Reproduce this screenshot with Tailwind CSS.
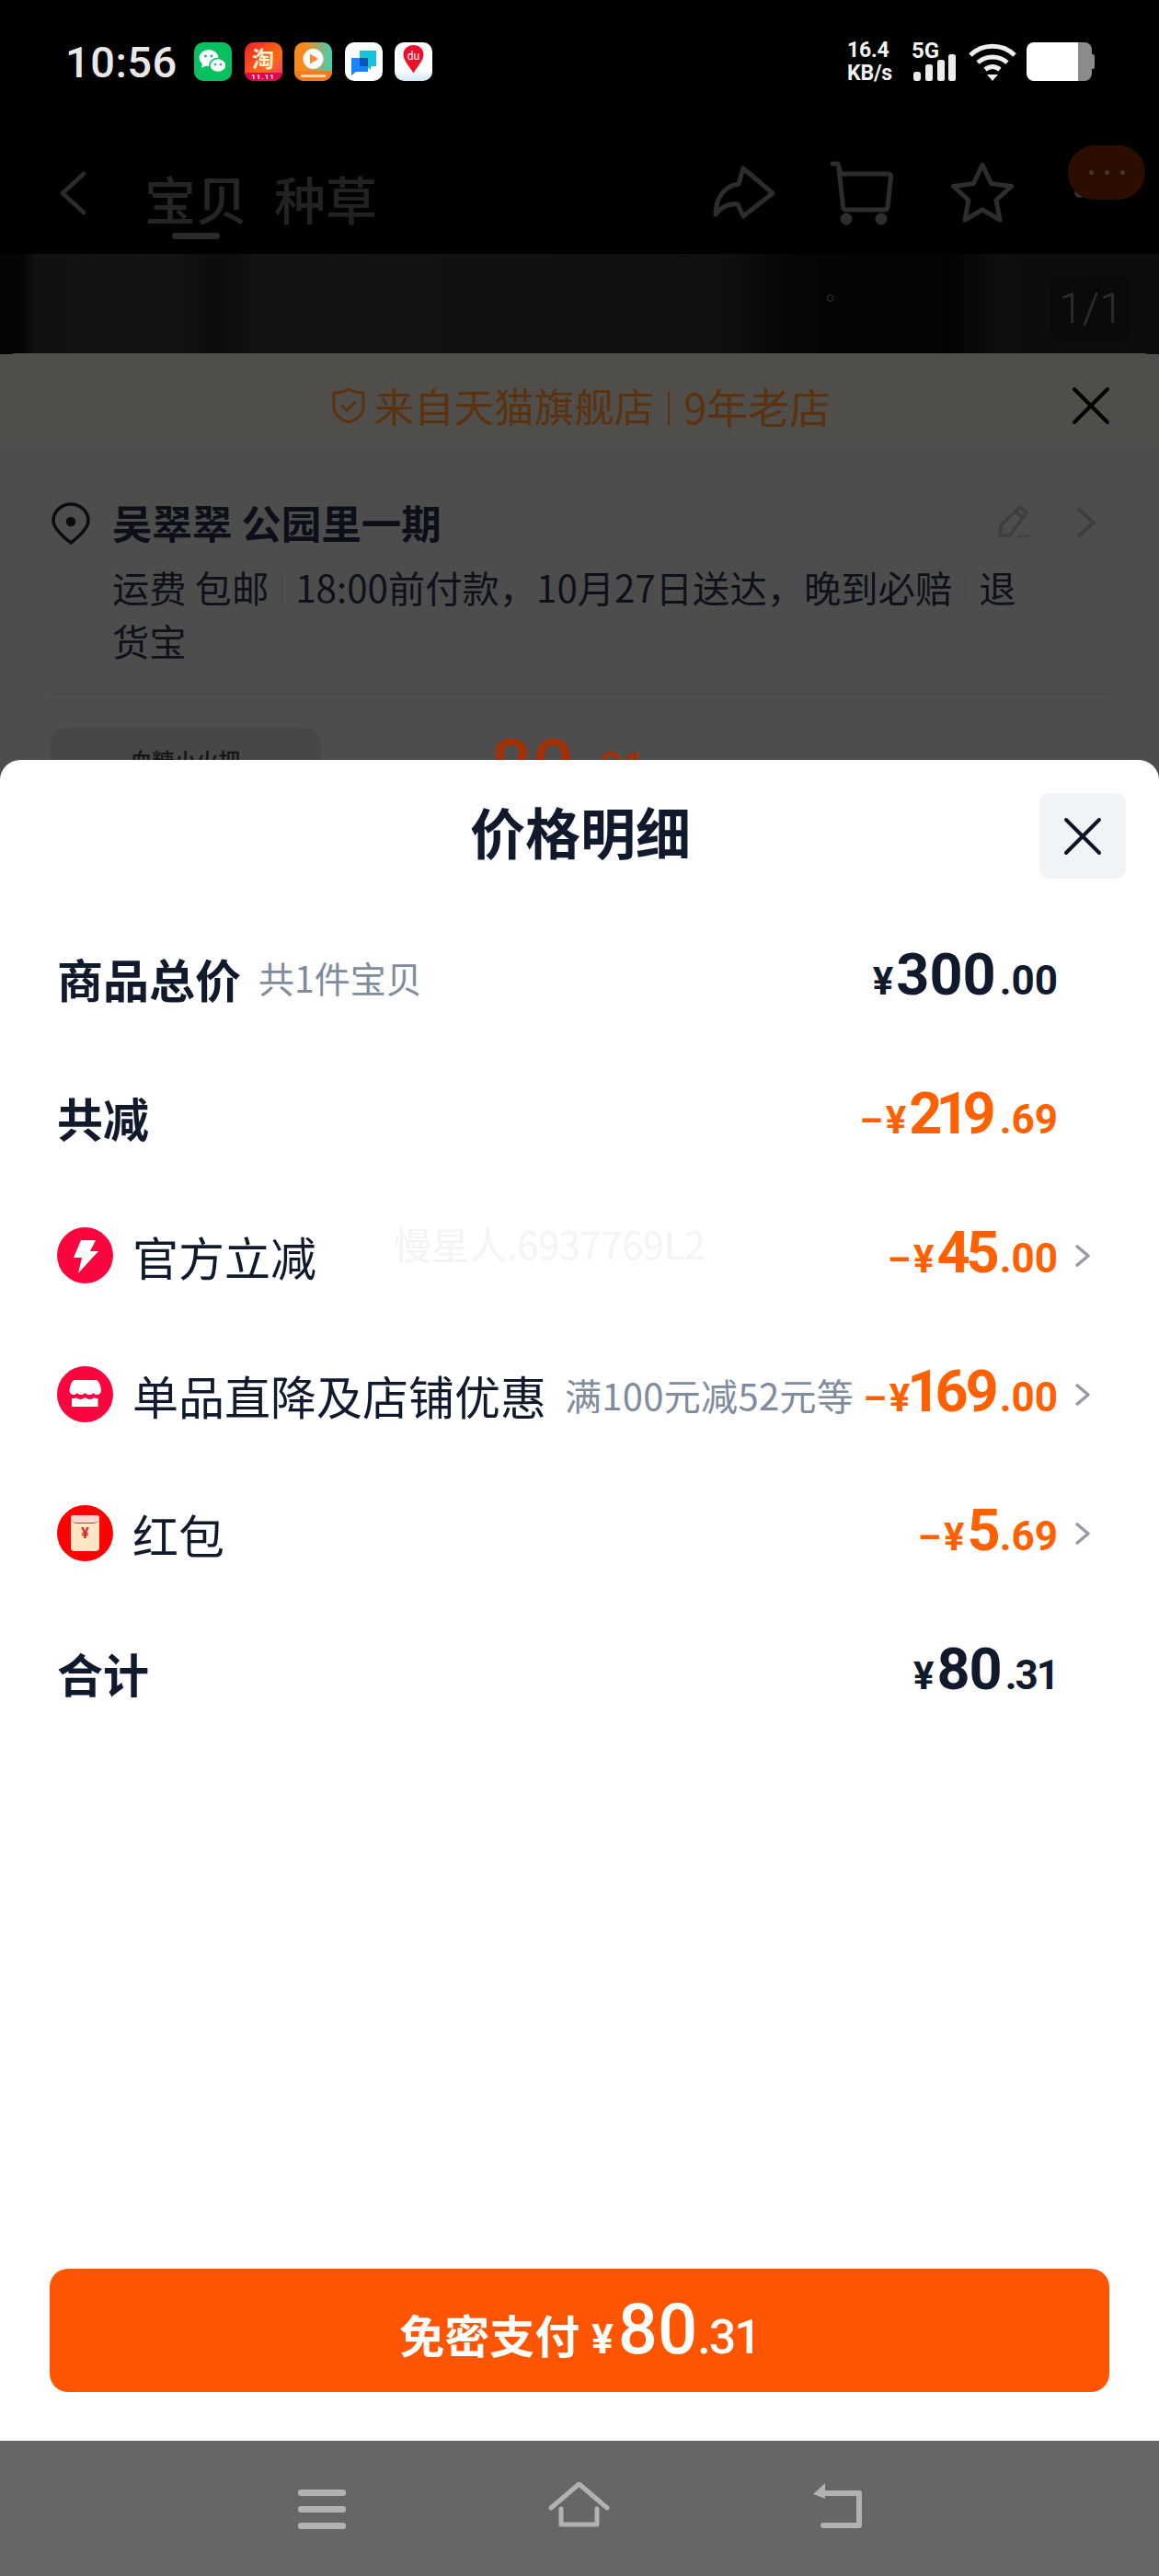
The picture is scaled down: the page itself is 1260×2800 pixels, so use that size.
<!DOCTYPE html>
<html lang="zh-CN">
<head>
    <meta charset="UTF-8">
    <meta name="viewport" content="width=device-width, initial-scale=1.0">
    <title>价格明细</title>
    <script src="https://cdn.jsdelivr.net/npm/@tailwindcss/browser@4"></script>
</head>
<body class="bg-black font-['Noto_Sans_CJK_SC',sans-serif]">
<div class="w-[1260px] h-[2800px] flex flex-col overflow-hidden">

    <!-- Dimmed page behind the sheet -->
    <div class="h-[826px] shrink-0 bg-[#4d4d4d] flex flex-col overflow-hidden">
        <div class="bg-black h-[276px] shrink-0 flex flex-col">
            <!-- Status bar -->
            <div class="h-[148px] shrink-0 flex justify-between pt-[46px] pl-[71px] pr-[70px] relative">
                <div class="flex items-start">
                    <span class="w-[122px] h-[42px] flex items-center text-[47px] leading-none font-medium text-[#e8e8e8] font-['Roboto',sans-serif] tracking-[0.5px]">10:56</span>
                    <div class="flex gap-[13.5px] ml-[18px]">
                        <!-- wechat -->
                        <svg class="w-[41px] h-[42px]" viewBox="0 0 41 42"><rect width="41" height="42" rx="10" fill="#07c160"/><ellipse cx="16" cy="17" rx="10.5" ry="9" fill="#fff"/><path d="M9 23l-1 5 6-3z" fill="#fff"/><ellipse cx="26" cy="25" rx="9" ry="7.5" fill="#fff" stroke="#07c160" stroke-width="1.5"/><circle cx="12.5" cy="15" r="1.4" fill="#07c160"/><circle cx="19" cy="15" r="1.4" fill="#07c160"/><circle cx="23" cy="24" r="1.2" fill="#07c160"/><circle cx="29" cy="24" r="1.2" fill="#07c160"/></svg>
                        <!-- taobao -->
                        <div class="w-[41px] h-[42px] rounded-[10px] overflow-hidden flex flex-col bg-[linear-gradient(135deg,#e8202a,#ff6a13_60%,#f0307a)]">
                            <span class="h-[33px] flex items-center justify-center text-[24px] leading-none font-bold text-[#fff3d0]">淘</span>
                            <span class="h-[9px] bg-[#e6004d] text-[8px] leading-[9px] text-center text-white font-bold font-['Roboto',sans-serif] tracking-[1px]">11.11</span>
                        </div>
                        <!-- video -->
                        <svg class="w-[41px] h-[42px]" viewBox="0 0 41 42"><defs><linearGradient id="v" x1="0" y1="0" x2="1" y2="0"><stop offset="0.3" stop-color="#f78a1e"/><stop offset="1" stop-color="#3fd0b4"/></linearGradient></defs><rect width="41" height="42" rx="10" fill="url(#v)"/><path d="M0 31h41v1a10 10 0 0 1-10 10H10A10 10 0 0 1 0 32z" fill="#f47a1c"/><circle cx="20.500" cy="18" r="11" fill="#fff"/><path d="M17 12.500l9 5.500-9 5.500z" fill="#f78a2e"/><rect x="7" y="35" width="27" height="3" fill="#ffd9b3"/></svg>
                        <!-- messages -->
                        <svg class="w-[41px] h-[42px]" viewBox="0 0 41 42"><rect width="41" height="42" rx="10" fill="#fff"/><path d="M16 9h18v17h-6v4l-5-4h-7z" fill="#17c3d6"/><path d="M7 17h18v15H12l-5 4z" fill="#1a84ff"/><rect x="16" y="17" width="9" height="9" fill="#0b55b5"/></svg>
                        <!-- baidu map -->
                        <div class="w-[41px] h-[42px] rounded-[10px] overflow-hidden bg-[linear-gradient(180deg,#fff_70%,#cfe9f5)] flex justify-center relative">
                            <svg class="w-[41px] h-[42px]" viewBox="0 0 41 42"><path d="M20.500 3c6.500 0 11 4.600 11 10.500 0 6-6 12-11 20-5-8-11-14-11-20C9.500 7.600 14 3 20.500 3z" fill="#ee0f2d"/></svg>
                            <span class="absolute top-[9px] text-[12px] leading-none text-white font-['Roboto',sans-serif]">du</span>
                        </div>
                    </div>
                </div>
                <div class="flex items-start">
                    <div class="w-[54px] font-['Roboto',sans-serif] font-bold text-[#f2f2f2] text-[23px] leading-[25px] -mt-[4px] tracking-[-0.2px]">
                        <div>16.4</div>
                        <div>KB/s</div>
                    </div>
                    <div class="w-[50px] ml-[16px] relative h-[42px]">
                        <span class="absolute left-0 -top-[3px] font-['Roboto',sans-serif] font-bold text-[#f2f2f2] text-[24px] leading-[24px]">5G</span>
                        <svg class="absolute left-0 top-0 w-[50px] h-[42px]" viewBox="0 0 50 42" fill="#ececec"><rect x="2" y="32" width="8" height="10" rx="3"/><rect x="15" y="24" width="8" height="18" rx="2.500"/><rect x="28" y="19" width="8" height="23" rx="2.500"/><rect x="40" y="13" width="8" height="29" rx="2.500"/></svg>
                    </div>
                    <svg class="w-[52px] h-[42px] ml-[12px]" viewBox="0 0 52 42" fill="none" stroke="#f0f0f0" stroke-width="5"><path d="M2 14C15 1 37 1 50 14"/><path d="M10 22c9-8 23-8 32 0"/><path d="M18 29.500c5-4 11-4 16 0"/><path d="M26 42l-6-7h12z" fill="#f0f0f0" stroke="none"/></svg>
                    <div class="flex items-center ml-[11px]">
                        <div class="w-[71px] h-[42px] rounded-[8px] overflow-hidden flex">
                            <div class="w-[56px] bg-white"></div>
                            <div class="flex-1 bg-[#8b8b8b]"></div>
                        </div>
                        <div class="w-[3px] h-[16px] rounded-r-[2px] bg-[#8b8b8b]"></div>
                    </div>
                </div>
            </div>
            <!-- Top nav -->
            <div class="h-[128px] flex items-start relative">
                <svg class="w-[30px] h-[48px] ml-[64px] mt-[38px] shrink-0" viewBox="0 0 30 48" fill="none" stroke="#2c2c2c" stroke-width="4.500" stroke-linecap="round" stroke-linejoin="round"><path d="M27 3L4 24l23 21"/></svg>
                <div class="ml-[65px] mt-[34px] flex flex-col items-center w-[108px]">
                    <span class="text-[56px] leading-[66px] font-medium text-[#252525] whitespace-nowrap">宝贝</span>
                    <span class="w-[52px] h-[7px] rounded-full bg-[#2a2a2a] mt-[5px]"></span>
                </div>
                <span class="ml-[31px] mt-[34px] text-[56px] leading-[66px] font-medium text-[#222] whitespace-nowrap">种草</span>
                <svg class="ml-[364px] mt-[31px] w-[70px] h-[60px] shrink-0" viewBox="0 0 70 60" fill="none" stroke="#2d2d2d" stroke-width="5" stroke-linejoin="round" stroke-linecap="round"><path d="M34 4L66 31 34 56 28 43C17 42 9 47 4 54 4 37 13 23 29 21z"/></svg>
                <svg class="ml-[59px] mt-[27px] w-[70px] h-[70px] shrink-0" viewBox="0 0 70 70" fill="none" stroke="#2d2d2d" stroke-width="5" stroke-linecap="round" stroke-linejoin="round"><path d="M2 3h6l3 11h52q3 0 2.500 3L62 50q-.5 3-4 3H17q-3 0-3.500-3L9 8"/><circle cx="17" cy="63" r="4" fill="#2d2d2d"/><circle cx="55" cy="63" r="4" fill="#2d2d2d"/></svg>
                <svg class="ml-[61px] mt-[28px] w-[68px] h-[66px] shrink-0" viewBox="0 0 68 66" fill="none" stroke="#2d2d2d" stroke-width="5" stroke-linejoin="round"><path d="M34 3l9.500 20.500 22 3L49 41.500 53 63 34 52 15 63l4-21.500L2.500 26.500l22-3z"/></svg>
                <!-- more button with red chat blob on top -->
                <div class="absolute left-[1168px] top-[55px] flex gap-[16px]">
                    <span class="w-[12px] h-[12px] rounded-full bg-[#333]"></span>
                    <span class="w-[12px] h-[12px] rounded-full bg-[#333]"></span>
                </div>
                <div class="absolute left-[1161px] top-[10px] w-[84px] h-[59px] rounded-[29px] bg-[#2b0e00] flex items-center justify-center gap-[12px]">
                    <span class="w-[5px] h-[5px] rounded-full bg-[#4d3526]"></span>
                    <span class="w-[5px] h-[5px] rounded-full bg-[#4d3526]"></span>
                    <span class="w-[5px] h-[5px] rounded-full bg-[#4d3526]"></span>
                </div>
            </div>
        </div>

        <!-- Product image strip -->
        <div class="h-[109px] shrink-0 relative bg-[linear-gradient(90deg,#050505_0,#050505_2%,#111_3%,#131313_15%,#0b0b0b_19%,#121212_22%,#111_50%,#0f1010_62%,#060606_68%,#030303_82%,#0e0e0e_86%,#0c0c0c_100%)]">
            <span class="absolute left-[899px] top-[44px] w-[7px] h-[8px] rounded-full border border-[#3a3a3a]"></span>
            <div class="absolute left-[1142px] top-[24px] w-[88px] h-[70px] rounded-[10px] bg-[#0a0a0a] flex items-center justify-center text-[46px] font-light text-[#2e2e2e] font-['Roboto',sans-serif]">1/1</div>
        </div>

        <!-- Order sheet behind -->
        <div class="flex-1 -mt-px rounded-t-[18px] bg-[#4d4d4d] shadow-[0_-1px_0_#5b5a52]">
            <div class="h-[118px] rounded-t-[18px] bg-[linear-gradient(180deg,#504e49,#4f4e4a_75%,#4c4d4e)] relative flex items-center justify-center pb-[2px]">
                <div class="flex items-center text-[#5a3210] text-[45px] leading-none -mt-[2px] ml-[4px]">
                    <svg class="w-[36px] h-[40px] mr-[10px]" viewBox="0 0 36 40" fill="none" stroke="#5a3210" stroke-width="3" stroke-linejoin="round" stroke-linecap="round"><path d="M18 2c5 3 10 4 16 4v15c0 8-7 14-16 17C9 35 2 29 2 21V6c6 0 11-1 16-4z"/><path d="M11 20l5 5 9-9"/></svg>
                    <span class="text-[43.5px]">来自天猫旗舰店</span>
                    <span class="w-[2px] h-[36px] bg-[#5a3210] mx-[15px] mt-[6px]"></span>
                    <span>9年老店</span>
                </div>
                <svg class="absolute left-[1165px] top-[36px] w-[42px] h-[42px]" viewBox="0 0 42 42" fill="none" stroke="#000" stroke-width="4" stroke-linecap="round"><path d="M3 3l36 36M39 3L3 39"/></svg>
            </div>
            <div class="relative px-[54px]">
                <div class="border-b border-[#454545] pb-[36px] h-[253px]">
                    <div class="flex items-center pt-[40px]">
                        <svg class="w-[42px] h-[46px] shrink-0 ml-[2px] mt-[2px]" viewBox="0 0 42 46" fill="none" stroke="#0a0c12" stroke-width="3.500"><path d="M21 44C8 34 2 27 2 20a19 18 0 0 1 38 0c0 7-6 14-19 24z"/><circle cx="21" cy="21" r="3.500" fill="#0a0c12"/></svg>
                        <span class="ml-[24px] text-[43.5px] leading-[52px] font-bold text-[#0c0f18] whitespace-nowrap">吴翠翠 公园里一期</span>
                        <svg class="ml-auto w-[38px] h-[38px] shrink-0" viewBox="0 0 38 38" fill="none" stroke="#3e3e3e" stroke-width="3.500" stroke-linejoin="round"><path d="M25 2l7 6-18 25H3l1-11z"/><path d="M21 8l8 6"/><path d="M22 35c3-3 4 1 7-1s3 1 6-1" stroke-width="2"/></svg>
                        <svg class="ml-[48px] mr-[14px] w-[22px] h-[32px] shrink-0" viewBox="0 0 22 32" fill="none" stroke="#3e3e3e" stroke-width="4" stroke-linecap="round" stroke-linejoin="round"><path d="M3 2l16 14L3 30"/></svg>
                    </div>
                    <div class="pl-[68px] pr-[90px] mt-[15px] text-[40.3px] leading-[58px] text-[#0e1119]">
                        <span>运费 包邮</span><span class="inline-block w-px h-[36px] bg-[#444] mx-[14px] align-[-4px]"></span><span>18:00前付款，10月27日送达，晚到必赔</span><span class="inline-block w-px h-[36px] bg-[#444] mx-[14px] align-[-4px]"></span><span>退货宝</span>
                    </div>
                </div>
                <!-- Product row, cut off by the sheet in front -->
                <div class="flex mt-[36px] items-start">
                    <div class="w-[295px] h-[80px] rounded-t-[20px] bg-[#474747] text-center pt-[20px] text-[24px] leading-[30px] font-medium text-[#151515]">血糖小火把</div>
                    <span class="ml-[184px] mt-[2px] text-[80px] leading-[80px] font-medium text-[#9f3208] font-['Roboto',sans-serif]">80</span>
                    <span class="mt-[18px] ml-[16px] text-[44px] leading-[50px] font-medium text-[#9f3208] font-['Roboto',sans-serif]">.31</span>
                </div>
            </div>
        </div>
    </div>

    <!-- Price detail sheet -->
    <div class="h-[1827px] shrink-0 bg-[#4d4d4d]">
        <div class="h-full bg-white rounded-t-[22px] flex flex-col relative">
            <div class="h-[161px] shrink-0 flex items-center justify-center relative">
                <h1 class="text-[60px] leading-none font-bold text-[#111a2c] -mt-[8px] ml-[2px]">价格明细</h1>
                <div class="absolute left-[1130px] top-[36px] w-[94px] h-[93px] rounded-[10px] bg-[#f1f5f8] flex items-center justify-center">
                    <svg class="w-[42px] h-[42px]" viewBox="0 0 42 42" fill="none" stroke="#0d1526" stroke-width="4" stroke-linecap="round"><path d="M3 3l36 36M39 3L3 39"/></svg>
                </div>
            </div>

            <!-- watermark -->
            <span class="absolute left-[428px] top-[500px] text-[41px] leading-[50px] text-[#f4f4f4] whitespace-nowrap">慢星人.6937769L2</span>

            <div class="flex flex-col font-['Roboto','Noto_Sans_CJK_SC',sans-serif]">
                <div class="h-[151px] flex items-center pl-[62px] pr-[74px]">
                    <span class="text-[50px] leading-none font-bold text-[#111a2c] font-['Noto_Sans_CJK_SC',sans-serif]">商品总价</span>
                    <span class="ml-[19px] text-[39px] leading-none text-[#7e8c9d] font-['Noto_Sans_CJK_SC',sans-serif]">共1件宝贝</span>
                    <div class="ml-auto mt-[2px] flex items-baseline font-bold text-[#111a2c]">
                        <span class="text-[42px]">¥</span><span class="text-[63px] leading-none ml-[3px]">300</span><span class="text-[44px] ml-[4px]">.00</span>
                    </div>
                    <span class="w-[36px] shrink-0"></span>
                </div>
                <div class="h-[151px] flex items-center pl-[62px] pr-[74px]">
                    <span class="text-[50px] leading-none font-bold text-[#111a2c] font-['Noto_Sans_CJK_SC',sans-serif]">共减</span>
                    <div class="ml-auto mt-[2px] flex items-baseline font-bold text-[#ff6000]">
                        <span class="text-[40px] mr-[3px]">–</span><span class="text-[42px]">¥</span><span class="text-[63px] leading-none ml-[3px]">2<span class="-mx-[7px]">1</span>9</span><span class="text-[44px] ml-[4px]">.69</span>
                    </div>
                    <span class="w-[36px] shrink-0"></span>
                </div>
                <div class="h-[151px] flex items-center pl-[62px] pr-[74px]">
                    <svg class="w-[61px] h-[61px] shrink-0" viewBox="0 0 61 61"><circle cx="30.500" cy="30.500" r="30.500" fill="#f8063d"/><path d="M26 14h16l-6 12h9L23 50l4-17h-9z" fill="#fff"/></svg>
                    <span class="ml-[21px] text-[50px] leading-none text-[#111a2c] font-['Noto_Sans_CJK_SC',sans-serif]">官方立减</span>
                    <div class="ml-auto mt-[2px] flex items-baseline font-bold text-[#ff6000]">
                        <span class="text-[40px] mr-[3px]">–</span><span class="text-[42px]">¥</span><span class="text-[63px] leading-none ml-[3px] tracking-[-4px]">45</span><span class="text-[44px] ml-[4px]">.00</span>
                    </div>
                    <svg class="ml-[18px] w-[18px] h-[26px] shrink-0" viewBox="0 0 18 26" fill="none" stroke="#9a9aa3" stroke-width="3.500" stroke-linejoin="round"><path d="M2 2l13 11L2 24"/></svg>
                </div>
                <div class="h-[151px] flex items-center pl-[62px] pr-[74px]">
                    <svg class="w-[61px] h-[61px] shrink-0" viewBox="0 0 61 61"><circle cx="30.500" cy="30.500" r="30.500" fill="#f8063d"/><path d="M19 15h23c3 0 5 4 6 11 0 3-2 5-4.500 5-2 0-3-1-4-2-1.500 2-3 2-4.500 2s-3-.5-4.500-2c-1.500 1.500-3 2-4.500 2s-3-.5-4-2c-1 1-2 2-4 2-2.500 0-4.500-2-4.500-5 1-7 3-11 6-11z" fill="#fff"/><path d="M16 35c2 0 3 .5 4.500-1 1.500 1 3 2 5 2s3-1 5-2c2 1 3 2 5 2s3.500-1 5-2c1.500 1.500 2.500 1 4 1v9H16z" fill="#fff"/></svg>
                    <span class="ml-[21px] text-[50px] leading-none text-[#111a2c] font-['Noto_Sans_CJK_SC',sans-serif] whitespace-nowrap">单品直降及店铺优惠</span>
                    <span class="ml-[20px] text-[40px] leading-none text-[#7e8c9d] font-['Noto_Sans_CJK_SC',sans-serif] whitespace-nowrap tracking-[0.3px]">满100元减52元等</span>
                    <div class="ml-auto mt-[2px] flex items-baseline font-bold text-[#ff6000]">
                        <span class="text-[40px] mr-[3px]">–</span><span class="text-[42px]">¥</span><span class="text-[63px] leading-none ml-[1px]"><span class="-ml-[4px] -mr-[6px]">1</span><span class="tracking-[-3px]">69</span></span><span class="text-[44px] ml-[4px]">.00</span>
                    </div>
                    <svg class="ml-[18px] w-[18px] h-[26px] shrink-0" viewBox="0 0 18 26" fill="none" stroke="#9a9aa3" stroke-width="3.500" stroke-linejoin="round"><path d="M2 2l13 11L2 24"/></svg>
                </div>
                <div class="h-[151px] flex items-center pl-[62px] pr-[74px]">
                    <div class="w-[61px] h-[61px] shrink-0 rounded-full bg-[#fe0000] flex items-center justify-center">
                        <div class="w-[31px] h-[39px] rounded-[4px] bg-[#fde6c4] flex flex-col items-center">
                            <span class="w-full h-[9px] rounded-t-[4px] rounded-b-[10px] bg-[#fdd9d0] border-b border-[#d33]"></span>
                            <span class="text-[16px] leading-[22px] font-bold text-[#d9252a]">¥</span>
                        </div>
                    </div>
                    <span class="ml-[21px] text-[50px] leading-none text-[#111a2c] font-['Noto_Sans_CJK_SC',sans-serif]">红包</span>
                    <div class="ml-auto mt-[2px] flex items-baseline font-bold text-[#ff6000]">
                        <span class="text-[40px] mr-[3px]">–</span><span class="text-[42px]">¥</span><span class="text-[63px] leading-none ml-[3px] tracking-[-5px]">5</span><span class="text-[44px] ml-[4px]">.69</span>
                    </div>
                    <svg class="ml-[18px] w-[18px] h-[26px] shrink-0" viewBox="0 0 18 26" fill="none" stroke="#9a9aa3" stroke-width="3.500" stroke-linejoin="round"><path d="M2 2l13 11L2 24"/></svg>
                </div>
                <div class="h-[151px] flex items-center pl-[62px] pr-[74px]">
                    <span class="text-[50px] leading-none font-bold text-[#111a2c] font-['Noto_Sans_CJK_SC',sans-serif]">合计</span>
                    <div class="ml-auto mt-[2px] flex items-baseline font-bold text-[#111a2c]">
                        <span class="text-[42px]">¥</span><span class="text-[63px] leading-none ml-[3px] tracking-[-1px]">80</span><span class="text-[44px] ml-[4px] tracking-[-2px]">.31</span>
                    </div>
                    <span class="w-[36px] shrink-0"></span>
                </div>
            </div>

            <div class="mt-auto px-[54px] pb-[53px]">
                <button class="w-full h-[134px] rounded-[20px] bg-[#ff5500] text-white flex items-baseline justify-center pt-[28px] font-bold">
                    <span class="text-[49px] leading-none">免密支付</span>
                    <span class="ml-[13px] text-[44px] leading-none font-['Roboto',sans-serif]">¥</span>
                    <span class="ml-[5px] text-[76px] leading-none font-medium font-['Roboto',sans-serif]">80</span>
                    <span class="text-[52px] leading-none font-medium font-['Roboto',sans-serif] tracking-[-2px]">.31</span>
                </button>
            </div>
        </div>
    </div>

    <!-- Android nav bar -->
    <div class="flex-1 bg-[#666] flex items-start pt-[45px] pl-[324px]">
        <div class="w-[52px] h-[50px] mt-[8px] flex flex-col gap-[11px] shrink-0">
            <span class="h-[7px] rounded-[3px] bg-[#b2b2b2]"></span>
            <span class="h-[7px] rounded-[3px] bg-[#b2b2b2]"></span>
            <span class="h-[7px] rounded-[3px] bg-[#b2b2b2]"></span>
        </div>
        <svg class="ml-[220px] w-[67px] h-[50px] shrink-0" viewBox="0 0 67 50" fill="none" stroke="#b2b2b2" stroke-width="5" stroke-linecap="round" stroke-linejoin="round"><path d="M3 28L33.500 2 64 28"/><path d="M14 29v17h39V29"/></svg>
        <svg class="ml-[220px] w-[56px] h-[50px] shrink-0" viewBox="0 0 56 50" fill="none"><path d="M11 12h40v35H12" stroke="#b2b2b2" stroke-width="6" stroke-linejoin="round" stroke-linecap="round"/><path d="M14 1L1 13l13 5z" fill="#b2b2b2"/></svg>
    </div>
</div>
</body>
</html>
